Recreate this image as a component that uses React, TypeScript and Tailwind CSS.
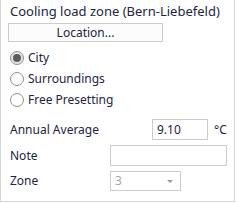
import React from "react";

function Radio({ checked, label }: { checked?: boolean; label: string }) {
  return (
    <div className="flex items-center h-[20px]">
      <span
        className={`w-[14px] h-[14px] rounded-full border border-[#8f8f8f] flex items-center justify-center ${checked ? "bg-[#e6e6e6]" : "bg-white"}`}
      >
        {checked && <span className="w-[8px] h-[8px] rounded-full bg-[#5b5b5b]" />}
      </span>
      <span className="ml-[4px]">{label}</span>
    </div>
  );
}

export default function App() {
  return (
    <div
      className="w-[235px] h-[202px] border-x border-b border-[#d6d6d6] bg-white text-[12px] text-[#22243f] relative"
      style={{ fontFamily: '"Noto Sans", "Open Sans", sans-serif' }}
    >
      <div className="pl-[9px] pt-[2px] h-[18px] leading-[18px] text-[13px]">Cooling load zone (Bern-Liebefeld)</div>
      <div className="ml-[7px] mt-[5px] w-[155px] h-[19px] border border-[#cccccc] bg-[#fcfcfc] flex items-center justify-center leading-none">
        Location...
      </div>
      <div className="ml-[9px] mt-[6px] flex flex-col gap-[1px]">
        <Radio checked label="City" />
        <Radio label="Surroundings" />
        <Radio label="Free Presetting" />
      </div>
      <div className="mt-[9px] flex flex-col gap-[5px]">
        <div className="flex items-center h-[21px]">
          <span className="pl-[9px] w-[151px]">Annual Average</span>
          <div className="w-[56px] h-[21px] border border-[#cccccc] flex items-center pl-[4px]">9.10</div>
          <span className="ml-[6px]">°C</span>
        </div>
        <div className="flex items-center h-[21px]">
          <span className="pl-[9px] w-[109px]">Note</span>
          <div className="w-[117px] h-[21px] border border-[#cccccc]" />
        </div>
        <div className="flex items-center h-[20px]">
          <span className="pl-[9px] w-[109px]">Zone</span>
          <div className="w-[71px] h-[20px] border border-[#cccccc] flex items-center justify-between pl-[4px] pr-[7px] text-[#a8a8a8]">
            <span>3</span>
            <span className="w-0 h-0 border-l-[3px] border-r-[3px] border-t-[3px] border-l-transparent border-r-transparent border-t-[#9a9a9a]" />
          </div>
        </div>
      </div>
    </div>
  );
}
